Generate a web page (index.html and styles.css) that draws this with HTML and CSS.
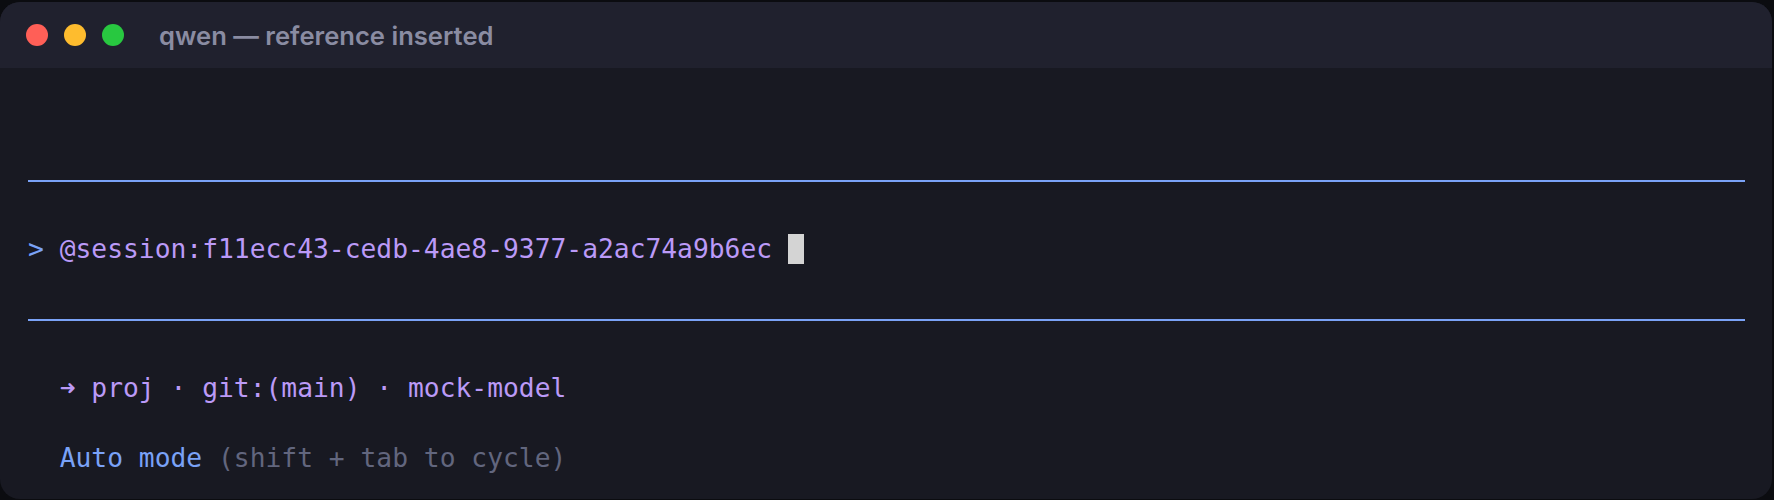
FILE: index.html
```html
<!DOCTYPE html>
<html lang="en">
<head>
<meta charset="utf-8">
<title>qwen — reference inserted</title>
<link rel="stylesheet" href="styles.css">
</head>
<body>
<div class="window">
  <div class="titlebar">
    <div class="lights">
      <span class="light red"></span>
      <span class="light yellow"></span>
      <span class="light green"></span>
    </div>
    <div class="title">qwen — reference inserted</div>
  </div>
  <div class="term">
    <div class="rule"></div>
    <div class="row"><span class="blue">&gt; </span><span class="purple">@session:f11ecc43-cedb-4ae8-9377-a2ac74a9b6ec </span><span class="cursor"> </span></div>
    <div class="rule"></div>
    <div class="row purple">  ➜ proj · git:(main) · mock-model</div>
    <div class="row">  <span class="blue">Auto mode</span> <span class="gray">(shift + tab to cycle)</span></div>
  </div>
</div>
</body>
</html>
```
FILE: styles.css
```css
html, body {
  margin: 0;
  padding: 0;
  background: #0b0c10;
}

body {
  width: 1774px;
  height: 500px;
  overflow: hidden;
}

.window {
  margin-top: 2px;
  width: 1772px;
  height: 497px;
  border-radius: 20px;
  overflow: hidden;
  background: #181922;
  display: flex;
  flex-direction: column;
}

.titlebar {
  height: 66px;
  flex: none;
  background: #20212e;
  display: flex;
  align-items: center;
  padding-left: 26px;
}

.lights {
  display: flex;
  gap: 16px;
}

.light {
  width: 22px;
  height: 22px;
  border-radius: 50%;
  display: block;
}

.red { background: #ff5f57; }
.yellow { background: #febc2e; }
.green { background: #28c840; }

.title {
  margin-left: 35px;
  font-family: Inter, "Liberation Sans", sans-serif;
  font-weight: 600;
  font-size: 25.6px;
  color: #8a8ca2;
}

.term {
  padding: 94.5px 27px 0 28px;
  display: flex;
  flex-direction: column;
  gap: 34.5px;
  font-family: "DejaVu Sans Mono", "Liberation Mono", monospace;
  font-size: 26.3px;
  line-height: 35px;
}

.row {
  white-space: pre;
  height: 35px;
}

.rule {
  height: 35px;
  display: flex;
  align-items: center;
}

.rule::before {
  content: "";
  display: block;
  width: 100%;
  height: 2px;
  margin-top: 1px;
  background: #7aa2f7;
}

.blue { color: #7aa2f7; }
.purple { color: #bb9af7; }
.gray { color: #62667e; }

.cursor {
  background: #d4d4d4;
}
```
